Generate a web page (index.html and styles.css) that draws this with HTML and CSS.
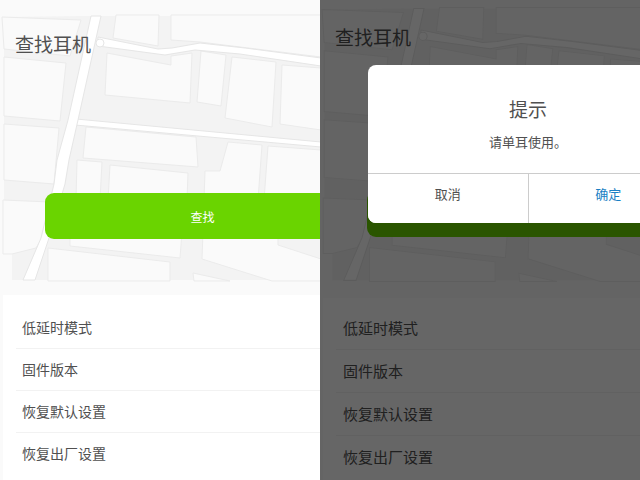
FILE: index.html
```html
<!DOCTYPE html>
<html lang="zh-CN">
<head>
    <meta charset="UTF-8">
    <meta name="viewport" content="width=device-width, initial-scale=1.0">
    <title>查找耳机</title>
    <link rel="stylesheet" href="styles.css">
</head>
<body>
    <!-- street map shared by both screens -->
    <svg class="defs" aria-hidden="true">
        <symbol id="map" viewBox="0 0 320 290">
            <path class="ground" d="M4 17L82 16H320V280H12V254L4 200Z"/>
            <g class="block">
                <path d="M2 17L81 20L70 56L4 49Z"/>
                <path d="M4 57L66 63L60 121L4 116Z"/>
                <path d="M4 124L59 128L54 184L4 180Z"/>
                <path d="M3 200L50 202L44 235L36 248L12 254L3 254Z"/>
                <path d="M116 15H159L158 46L113 38Z"/>
                <path d="M171 15H321V57L200 42L171 40Z"/>
                <path d="M107 53L171 65V56L192 53L190 103L105 95Z"/>
                <path d="M201 51L226 55L221 106L197 102Z"/>
                <path d="M232 57L276 62L272 127L225 118Z"/>
                <path d="M282 65L321 68V130L280 124Z"/>
                <path d="M86 127L196 137L198 167L83 158Z"/>
                <path d="M228 142L262 145L258 200H204L205 171L220 171Z"/>
                <path d="M268 146L321 150V200H264Z"/>
                <path d="M77 160L102 162L100 200H76Z"/>
                <path d="M110 165L188 173L187 200H108Z"/>
                <path d="M70 232H182L180 258L70 246Z"/>
                <path d="M48 248L170 262V281H48Z"/>
                <path d="M203 232H278L278 245L321 259V281H272L202 259Z"/>
                <path d="M193 273L230 281H194Z"/>
            </g>
            <g class="road">
                <path d="M98 37L158 49L172 48L200 43L245 48L321 58V66L240 54L195 50L165 55L98 46Z"/>
                <path d="M76 119L321 142V147L75 125Z"/>
                <path d="M91 16H101L78 120L69 160L65 184L49 238L35 280H23L41 238L54 184L57 160L68 120Z"/>
                <circle cx="100" cy="43" r="4"/>
            </g>
        </symbol>
    </svg>

    <main class="screens">
        <section class="screen">
            <div class="finder">
                <svg class="map" viewBox="0 0 320 290" aria-hidden="true"><use href="#map"/></svg>
                <h1>查找耳机</h1>
                <button type="button" class="find-btn">查找</button>
            </div>
            <nav class="settings">
                <a href="#latency">低延时模式</a>
                <a href="#firmware">固件版本</a>
                <a href="#defaults">恢复默认设置</a>
                <a href="#factory">恢复出厂设置</a>
            </nav>
        </section>

        <section class="screen screen-modal">
            <div class="finder">
                <svg class="map" viewBox="0 0 320 290" aria-hidden="true"><use href="#map"/></svg>
                <h1>查找耳机</h1>
                <button type="button" class="find-btn">查找</button>
            </div>
            <nav class="settings">
                <a href="#latency">低延时模式</a>
                <a href="#firmware">固件版本</a>
                <a href="#defaults">恢复默认设置</a>
                <a href="#factory">恢复出厂设置</a>
            </nav>
            <div class="overlay">
                <div class="dialog" role="dialog" aria-labelledby="dialog-title">
                    <h2 id="dialog-title">提示</h2>
                    <p>请单耳使用。</p>
                    <div class="dialog-actions">
                        <button type="button">取消</button>
                        <button type="button" class="confirm">确定</button>
                    </div>
                </div>
            </div>
        </section>
    </main>
</body>
</html>
```

FILE: styles.css
```css
* {
    box-sizing: border-box;
}
body {
    margin: 0;
    font-family: "Noto Sans CJK SC", sans-serif;
    color: #505050;
    background-color: #fafafa;
}
h1, h2, p {
    margin: 0;
    font-weight: 400;
}
button {
    padding: 0;
    border: none;
    font-family: inherit;
    color: inherit;
    cursor: pointer;
}
.defs {
    display: none;
}
.screens {
    display: flex;
    min-height: 100vh;
}
.screen {
    position: relative;
    flex: 1;
    display: flex;
    flex-direction: column;
    overflow: hidden;
    background-color: #fafafa;
}

/* map */
.map {
    position: absolute;
    top: 0;
    left: 0;
    width: 100%;
}
.ground {
    fill: #f3f3f3;
}
.block {
    fill: #fafafa;
    stroke: #ebebeb;
    stroke-width: 1;
}
.road {
    fill: #ffffff;
    stroke: #e6e6e6;
    stroke-width: 1;
}

/* title and find button */
.finder {
    padding: 30px 0 56px;
}
.finder h1 {
    position: relative;
    padding-left: 15px;
    font-size: 19px;
    line-height: 28px;
}
.find-btn {
    position: relative;
    display: block;
    width: calc(100% - 5px);
    height: 46px;
    margin: 135px 0 0 45px;
    border-radius: 9px;
    background-color: #6ad400;
    color: #ffffff;
    font-size: 12px;
}

/* settings list */
.settings {
    position: relative;
    flex: 1;
    margin-left: 3px;
    padding: 12px 0 0 13px;
    background-color: #ffffff;
}
.settings a {
    display: block;
    padding-left: 6px;
    border-bottom: 1px solid #f2f2f2;
    color: inherit;
    font-size: 14px;
    line-height: 41px;
    text-decoration: none;
}
.settings a:last-child {
    border-bottom: none;
}

/* screen with the dialog open */
.screen-modal .map {
    top: -8px;
    width: 103%;
}
.screen-modal .finder {
    padding: 23px 0 61px;
}
.screen-modal .find-btn {
    margin: 140px 0 0 47px;
}
.screen-modal .settings {
    padding-top: 9px;
}
.screen-modal .settings a {
    padding-left: 7px;
    font-size: 15px;
    line-height: 42px;
}
.overlay {
    position: absolute;
    inset: 0;
    background-color: rgba(0, 0, 0, 0.6);
}
.dialog {
    width: 100%;
    margin: 65px 0 0 48px;
    padding-top: 28px;
    border-radius: 8px;
    background-color: #ffffff;
    text-align: center;
    overflow: hidden;
}
.dialog h2 {
    font-size: 19px;
    line-height: 32px;
}
.dialog p {
    padding: 4px 0 18px;
    font-size: 13px;
    line-height: 26px;
}
.dialog-actions {
    display: flex;
    border-top: 1px solid #cccccc;
}
.dialog-actions button {
    flex: 1;
    height: 49px;
    padding-bottom: 10px;
    background-color: #ffffff;
    font-size: 13px;
}
.dialog-actions .confirm {
    border-left: 1px solid #cccccc;
    color: #1a7fc4;
}
```
